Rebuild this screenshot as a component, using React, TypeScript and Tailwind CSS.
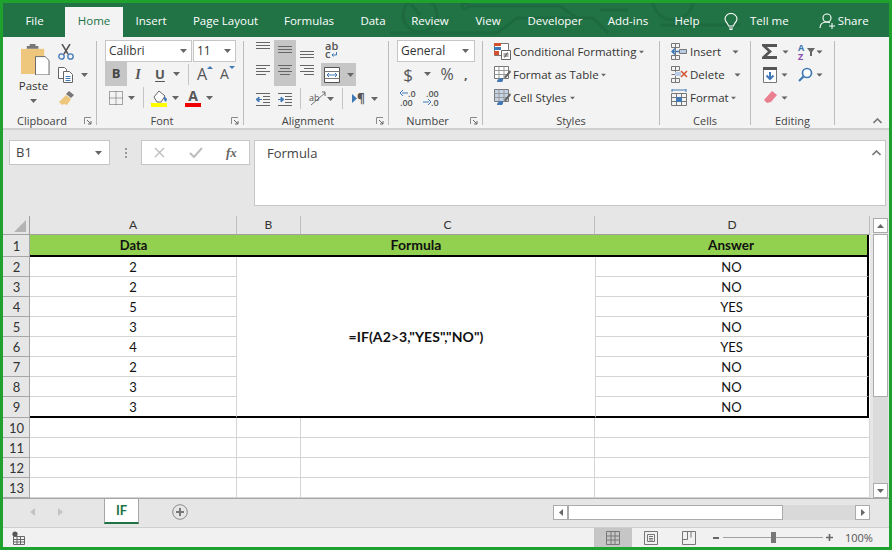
import type { ReactNode } from 'react';

const TABS = [
  { label: 'File', w: 'w-[61px]' },
  { label: 'Home', w: 'w-[58px]', active: true },
  { label: 'Insert', w: 'w-[56px]' },
  { label: 'Page Layout', w: 'w-[93px]' },
  { label: 'Formulas', w: 'w-[74px]' },
  { label: 'Data', w: 'w-[54px]' },
  { label: 'Review', w: 'w-[60px]' },
  { label: 'View', w: 'w-[56px]' },
  { label: 'Developer', w: 'w-[78px]' },
  { label: 'Add-ins', w: 'w-[68px]' },
  { label: 'Help', w: 'w-[50px]' },
];

const ROWS = [
  { n: 2, data: '2', answer: 'NO' },
  { n: 3, data: '2', answer: 'NO' },
  { n: 4, data: '5', answer: 'YES' },
  { n: 5, data: '3', answer: 'NO' },
  { n: 6, data: '4', answer: 'YES' },
  { n: 7, data: '2', answer: 'NO' },
  { n: 8, data: '3', answer: 'NO' },
  { n: 9, data: '3', answer: 'NO' },
];

function Caret({ className = '' }: { className?: string }) {
  return (
    <svg width="7" height="4" viewBox="0 0 7 4" className={`shrink-0 ${className}`}>
      <path d="M0 0h7L3.5 4z" fill="#666" />
    </svg>
  );
}

function Launcher() {
  return (
    <svg width="8" height="8" viewBox="0 0 8 8" className="absolute right-[4px] top-[6px]">
      <path d="M.5 7V.5H7" fill="none" stroke="#8a8a8a" />
      <path d="M3 3l4 4M7 4v3H4" fill="none" stroke="#666" />
    </svg>
  );
}

function Group({ label, w, launcher, children }: { label: string; w: string; launcher?: boolean; children: ReactNode }) {
  return (
    <div className={`${w} shrink-0 flex flex-col`}>
      <div className="h-[74px]">{children}</div>
      <div className={`relative flex-1 flex items-center justify-center text-[11px] leading-none text-[#444] pt-[1px] ${launcher ? 'pr-[16px]' : ''}`}>
        {label}
        {launcher && <Launcher />}
      </div>
    </div>
  );
}

function Sep() {
  return <div className="w-px h-[84px] mt-[4px] bg-[#bcbcbc] shrink-0" />;
}

function Lines({ ys, x = [[1, 15]] }: { ys: number[]; x?: number[][] }) {
  return (
    <svg width="16" height="16" viewBox="0 0 16 16">
      {ys.map((y, i) => {
        const seg = x[i % x.length];
        return <path key={y} d={`M${seg[0]} ${y + 0.5}H${seg[1]}`} stroke="#666" />;
      })}
    </svg>
  );
}

function IndentIcon({ flip }: { flip?: boolean }) {
  return (
    <svg width="16" height="14" viewBox="0 0 16 14">
      <path d="M1 1.5h14M8 4.5h7M8 7.5h7M8 10.5h7M1 13.5h14" stroke="#666" />
      <path d={flip ? 'M1 7.5h5M4 5l3 2.5L4 10z' : 'M7 7.5H2M4 5L1 7.5 4 10z'} stroke="#3f78b5" fill="#3f78b5" />
    </svg>
  );
}

function TableIcon({ fill }: { fill: string }) {
  return (
    <svg width="17" height="17" viewBox="0 0 17 17">
      <path d="M.5.5h14v12H.5z" fill={fill} stroke="#777" />
      <path d="M.5 4.5h14M.5 8.5h14M5 .5v12M10 .5v12" stroke="#999" />
      <path d="M16 4l-6 7 1.5 1.5L17 6z" fill="#666" />
      <path d="M3 16c0-3 3-4 5-4 2 1 1 3 0 4z" fill="#3f78b5" />
    </svg>
  );
}

function StyleRow({ icon, label, caretClass = 'ml-[3px]' }: { icon: ReactNode; label: string; caretClass?: string }) {
  return (
    <div className="h-[23px] flex items-center">
      <div className="w-[19px] shrink-0">{icon}</div>
      <span className="text-[11.5px] leading-none text-[#333] whitespace-nowrap">{label}</span>
      <Caret className={caretClass} />
    </div>
  );
}

function GridIcon({ children }: { children?: ReactNode }) {
  return (
    <svg width="17" height="18" viewBox="0 0 17 18">
      {children}
    </svg>
  );
}

function Ribbon() {
  return (
    <div className="h-[93px] bg-[#f3f3f3] border-b-2 border-[#cfcfcf] flex pl-[1px]">
      <Group label="Clipboard" w="w-[92px]" launcher>
        <div className="flex pt-[7px]">
          <div className="w-[53px] flex flex-col items-center pl-[6px]">
            <svg width="29" height="31" viewBox="0 0 30 32" className="ml-[3px]">
              <path d="M0 5h24v26H0z" fill="#eec67c" />
              <path d="M6 5h12V2h-3V0H9v2H6z" fill="#777" />
              <path d="M15 13h10l4 4v15H15z" fill="#fff" stroke="#666" />
            </svg>
            <span className="text-[11.5px] leading-none text-[#333] mt-[5px]">Paste</span>
            <Caret className="mt-[7px]" />
          </div>
          <div className="flex flex-col pl-[1px]">
            <svg width="16" height="16" viewBox="0 0 16 16">
              <path d="M4 0l6 10M12 0L6 10" stroke="#555" strokeWidth="1.5" />
              <circle cx="3.5" cy="12.5" r="2.7" fill="none" stroke="#3f78b5" strokeWidth="1.3" />
              <circle cx="12.5" cy="12.5" r="2.7" fill="none" stroke="#3f78b5" strokeWidth="1.3" />
            </svg>
            <div className="flex items-center gap-[7px] mt-[7px]">
              <svg width="16" height="16" viewBox="0 0 16 16">
                <path d="M.5.5h6l2 2v9h-8z" fill="#fff" stroke="#666" />
                <path d="M5.5 4.5h6l3 3v8h-9z" fill="#fff" stroke="#666" />
                <path d="M7.5 9.5h5M7.5 11.5h5M7.5 13.5h5" stroke="#3f78b5" />
              </svg>
              <Caret />
            </div>
            <svg width="17" height="15" viewBox="0 0 17 15" className="mt-[8px]">
              <path d="M11 0l5 4-3 3-5-4z" fill="#777" />
              <path d="M8 4l5 4-4 6-3-1-2 1-3-3 2-2z" fill="#eec67c" />
            </svg>
          </div>
        </div>
      </Group>
      <Sep />
      <Group label="Font" w="w-[146px]" launcher>
        <div className="pt-[3px] pl-[8px]">
          <div className="flex gap-px">
            <div className="w-[87px] h-[22px] bg-white border border-[#c6c6c6] flex items-center justify-between px-[3px]">
              <span className="text-[12px] leading-none text-[#333]">Calibri</span>
              <Caret className="mr-[1px]" />
            </div>
            <div className="w-[43px] h-[22px] bg-white border border-[#c6c6c6] flex items-center justify-between px-[3px]">
              <span className="text-[12px] leading-none text-[#333]">11</span>
              <Caret className="mr-[1px]" />
            </div>
          </div>
          <div className="flex items-center h-[24px]">
            <div className="w-[22px] h-[24px] bg-[#c6c6c6] flex items-center justify-center font-bold text-[13px] text-[#444]">B</div>
            <div className="w-[22px] text-center italic font-['Liberation_Serif',serif] font-bold text-[14px] text-[#555]">I</div>
            <div className="w-[22px] text-center text-[13px] leading-[14px] font-bold text-[#555] underline underline-offset-2">U</div>
            <Caret className="ml-[2px]" />
            <div className="w-px h-[21px] bg-[#c6c6c6] ml-[8px]" />
            <div className="ml-[8px] w-[20px] flex items-start">
              <span className="text-[16px] leading-[18px] text-[#555]">A</span>
              <svg width="6" height="3" viewBox="0 0 6 3" className="shrink-0 mt-[1px]"><path d="M0 3l3-3 3 3z" fill="#3f78b5" /></svg>
            </div>
            <div className="ml-[3px] w-[18px] flex items-start">
              <span className="text-[14px] leading-[18px] text-[#555]">A</span>
              <svg width="6" height="3" viewBox="0 0 6 3" className="shrink-0 mt-[1px]"><path d="M0 0h6L3 3z" fill="#3f78b5" /></svg>
            </div>
          </div>
          <div className="flex items-center h-[23px] pl-[4px]">
            <svg width="14" height="14" viewBox="0 0 14 14">
              <path d="M.5.5h13v13H.5zM.5 7h13M7 .5v13" fill="none" stroke="#555" strokeDasharray="1 1" />
            </svg>
            <Caret className="ml-[5px]" />
            <div className="w-px h-[21px] bg-[#c6c6c6] ml-[8px]" />
            <svg width="17" height="18" viewBox="0 0 17 18" className="ml-[7px]">
              <path d="M3 8l5-6 6 5-4 6H6z" fill="#fff" stroke="#666" />
              <path d="M13 7l3 3-1 3-2-2z" fill="#3f78b5" />
              <path d="M0 14h16v4H0z" fill="#ffff00" />
            </svg>
            <Caret className="ml-[4px]" />
            <div className="relative w-[16px] h-[18px] ml-[6px] flex flex-col items-center">
              <span className="text-[14px] leading-[14px] font-bold text-[#555]">A</span>
              <div className="w-[16px] h-[4px] bg-[#f00000]" />
            </div>
            <Caret className="ml-[5px]" />
          </div>
        </div>
      </Group>
      <Sep />
      <Group label="Alignment" w="w-[144px]" launcher>
        <div className="pl-[8px] pt-[3px]">
          <div className="flex">
            <div className="w-[22px] h-[46px] flex flex-col items-center">
              <Lines ys={[2, 5, 8]} />
              <div className="mt-[7px]">
                <Lines ys={[2, 5, 8, 11]} x={[[1, 15], [1, 11], [1, 15], [1, 11]]} />
              </div>
            </div>
            <div className="w-[22px] h-[46px] bg-[#c6c6c6] flex flex-col items-center">
              <div className="mt-[4px]"><Lines ys={[2, 5, 8]} /></div>
              <div className="mt-[3px]">
                <Lines ys={[2, 5, 8, 11]} x={[[1, 15], [3, 13], [1, 15], [3, 13]]} />
              </div>
            </div>
            <div className="w-[22px] h-[46px] flex flex-col items-center">
              <div className="mt-[9px]"><Lines ys={[2, 5, 8]} /></div>
              <div className="-mt-[2px]">
                <Lines ys={[2, 5, 8, 11]} x={[[1, 15], [5, 15], [1, 15], [5, 15]]} />
              </div>
            </div>
            <div className="flex flex-col ml-[3px]">
              <div className="h-[23px] pl-[4px] flex items-start">
                <div className="flex flex-col text-[11px] leading-[8px] font-semibold text-[#555] pt-[2px]">
                  <span>ab</span>
                  <span className="flex items-center gap-[1px]">
                    c
                    <svg width="6" height="5" viewBox="0 0 6 5"><path d="M5.5 0v3H1M2.5 1.5L1 3l1.5 1.5" fill="none" stroke="#3f78b5" /></svg>
                  </span>
                </div>
              </div>
              <div className="w-[35px] h-[23px] bg-[#c6c6c6] flex items-center gap-[7px] pl-[3px]">
                <svg width="16" height="16" viewBox="0 0 16 16">
                  <path d="M.5.5h15v15H.5z" fill="#fff" stroke="#555" />
                  <path d="M.5 4.5h15M.5 11.5h15" stroke="#777" />
                  <path d="M3 8h10M5 6L3 8l2 2M11 6l2 2-2 2" fill="none" stroke="#3f78b5" />
                </svg>
                <Caret />
              </div>
            </div>
          </div>
          <div className="flex items-center h-[23px] mt-[1px]">
            <div className="w-[22px] flex justify-center"><IndentIcon /></div>
            <div className="w-[22px] flex justify-center"><IndentIcon flip /></div>
            <div className="w-px h-[21px] bg-[#c6c6c6] ml-[4px]" />
            <svg width="18" height="16" viewBox="0 0 18 16" className="ml-[7px]">
              <path d="M3 14l14-12" stroke="#777" />
              <path d="M14 1h3v4" fill="none" stroke="#666" />
              <text x="1" y="10" fontSize="9" fill="#555" fontFamily="Open Sans, sans-serif">ab</text>
            </svg>
            <Caret className="ml-[1px]" />
            <div className="w-px h-[21px] bg-[#c6c6c6] ml-[8px]" />
            <span className="flex items-center ml-[9px] text-[12px] leading-none font-bold text-[#555]">
              <svg width="5" height="9" viewBox="0 0 5 9"><path d="M0 0l5 4.5L0 9z" fill="#3f78b5" /></svg>
              ¶
            </span>
            <Caret className="ml-[6px]" />
          </div>
        </div>
      </Group>
      <Sep />
      <Group label="Number" w="w-[93px]" launcher>
        <div className="pt-[3px] pl-[8px]">
          <div className="w-[78px] h-[22px] bg-white border border-[#c6c6c6] flex items-center justify-between px-[3px]">
            <span className="text-[12px] leading-none text-[#333]">General</span>
            <Caret className="mr-[2px]" />
          </div>
          <div className="flex items-center h-[24px]">
            <span className="w-[22px] text-center text-[17px] leading-none text-[#555]">$</span>
            <Caret className="ml-[5px]" />
            <span className="ml-[5px] w-[22px] text-center text-[16px] leading-none text-[#555]">%</span>
            <span className="ml-[6px] font-bold text-[13px] leading-none text-[#555]">,</span>
          </div>
          <div className="flex items-center h-[23px] pl-[3px] gap-[6px]">
            <div className="w-[17px] text-[9px] leading-[9px] font-semibold text-[#555]">
              <div className="flex items-center">
                <svg width="8" height="6" viewBox="0 0 8 6"><path d="M8 3H2M3 0L0 3l3 3" fill="none" stroke="#3f78b5" /></svg>
                .0
              </div>
              <div>.00</div>
            </div>
            <div className="w-[17px] text-[9px] leading-[9px] font-semibold text-[#555]">
              <div className="pl-[3px]">.00</div>
              <div className="flex items-center">
                <svg width="8" height="6" viewBox="0 0 8 6"><path d="M0 3h6M5 0l3 3-3 3" fill="none" stroke="#3f78b5" /></svg>
                .0
              </div>
            </div>
          </div>
        </div>
      </Group>
      <Sep />
      <Group label="Styles" w="w-[176px]">
        <div className="pt-[3px] pl-[11px]">
          <StyleRow
            label="Conditional Formatting"
            caretClass="ml-[2px] scale-75"
            icon={
              <svg width="17" height="17" viewBox="0 0 17 17">
                <path d="M.5.5h14v12H.5z" fill="#fff" stroke="#777" />
                <path d="M0 0h7v3H0z" fill="#d2502e" />
                <path d="M0 4h7v3H0z" fill="#3f78b5" />
                <path d="M0 8h5v4H0z" fill="#d2502e" />
                <path d="M7.5 7.5h9v9h-9z" fill="#fff" stroke="#666" />
                <path d="M9.5 11h5M9.5 13h5M13.5 9.5l-3 5" stroke="#555" />
              </svg>
            }
          />
          <StyleRow label="Format as Table" caretClass="ml-[1px] scale-75" icon={<TableIcon fill="#fff" />} />
          <StyleRow label="Cell Styles" caretClass="ml-[2px] scale-75" icon={<TableIcon fill="#c5d3e6" />} />
        </div>
      </Group>
      <Sep />
      <Group label="Cells" w="w-[90px]">
        <div className="pt-[3px] pl-[11px]">
          <StyleRow
            label="Insert"
            caretClass="ml-[11px] scale-90"
            icon={
              <GridIcon>
                <path d="M.5.5h8v4h-8zM.5 12.5h8v4h-8zM4.5.5v16" fill="none" stroke="#777" />
                <path d="M8.5 6.5h7v4h-7z" fill="#b8cde5" stroke="#777" />
                <path d="M8 8.5H1M4 5.5l-3 3 3 3" fill="none" stroke="#3f78b5" strokeWidth="1.5" />
              </GridIcon>
            }
          />
          <StyleRow
            label="Delete"
            caretClass="ml-[9px] scale-90"
            icon={
              <GridIcon>
                <path d="M.5.5h8v4h-8zM.5 12.5h8v4h-8zM4.5.5v16M.5 8.5h8" fill="none" stroke="#777" />
                <path d="M4 6h6v4H4z" fill="#b8cde5" />
                <path d="M10 5l6 6M16 5l-6 6" stroke="#d2502e" strokeWidth="1.5" />
              </GridIcon>
            }
          />
          <StyleRow
            label="Format"
            caretClass="ml-[1px] scale-75"
            icon={
              <GridIcon>
                <path d="M1 1h14" stroke="#3f78b5" />
                <path d="M1 0v3M15 0v3" stroke="#3f78b5" />
                <path d="M.5 4.5h15v12H.5zM.5 8.5h15M.5 12.5h15M5.5 4.5v12M10.5 4.5v12" fill="none" stroke="#777" />
                <path d="M5 8h6v5H5z" fill="#3f78b5" />
              </GridIcon>
            }
          />
        </div>
      </Group>
      <Sep />
      <Group label="Editing" w="w-[83px]">
        <div className="pt-[3px] pl-[11px]">
          <div className="h-[23px] flex items-center">
            <svg width="16" height="15" viewBox="0 0 16 15">
              <path d="M0 0h15v3H5l5 4.5L5 12h10v3H0v-2l6-5.5L0 2z" fill="#555" />
            </svg>
            <Caret className="ml-[4px] scale-90" />
            <div className="ml-[9px] w-[9px] text-[9px] leading-[9px] font-bold">
              <div className="text-[#3f78b5]">A</div>
              <div className="text-[#8a4fb0]">Z</div>
            </div>
            <svg width="8" height="8" viewBox="0 0 8 8"><path d="M0 0h8L5 4v4H3V4z" fill="#666" /></svg>
            <Caret className="ml-[1px] scale-90" />
          </div>
          <div className="h-[23px] flex items-center">
            <svg width="15" height="16" viewBox="0 0 15 16" className="ml-[1px]">
              <path d="M.5 2.5h13v13H.5z" fill="#fff" stroke="#777" />
              <path d="M0 0h14v3H0z" fill="#555" />
              <path d="M7 5v7M3.5 8.5L7 12l3.5-3.5" fill="none" stroke="#3f78b5" strokeWidth="2" />
            </svg>
            <Caret className="ml-[3px] scale-90" />
            <svg width="15" height="15" viewBox="0 0 15 15" className="ml-[10px]">
              <circle cx="9" cy="6" r="4.5" fill="#fff" stroke="#3f78b5" strokeWidth="1.7" />
              <path d="M5.5 9.5L1 14" stroke="#3f78b5" strokeWidth="2.2" />
            </svg>
            <Caret className="ml-[3px] scale-90" />
          </div>
          <div className="h-[23px] flex items-center">
            <svg width="14" height="13" viewBox="0 0 14 13" className="ml-[1px]">
              <path d="M9 0l5 4-6 7-4 1-3-3z" fill="#ea7f8f" />
            </svg>
            <Caret className="ml-[4px] scale-90" />
          </div>
        </div>
      </Group>
      <Sep />
      <div className="flex-1 relative">
        <svg width="9" height="6" viewBox="0 0 9 6" className="absolute right-[7px] bottom-[4px]">
          <path d="M.5 5l4-4 4 4" fill="none" stroke="#777" strokeWidth="1.6" />
        </svg>
      </div>
    </div>
  );
}

function TitleBar() {
  return (
    <div className="relative h-[34px] bg-[#217346] flex items-end pl-[1px]">
      <svg width="886" height="34" viewBox="3 3 886 34" className="absolute left-0 top-0">
        <g fill="none" stroke="#1e6a40" strokeWidth="3">
          <circle cx="420" cy="15" r="17" />
          <path d="M411 4l9 11" />
          <path d="M390 33h107l20-15h76l15 15" />
          <circle cx="465" cy="6" r="3" />
          <path d="M468 6h92l20 14" />
          <circle cx="673" cy="0" r="20" />
          <path d="M660 25h80M600 10h28" />
        </g>
      </svg>
      {TABS.map(t => (
        <div
          key={t.label}
          className={`relative ${t.w} h-[30px] flex items-center justify-center text-[11.5px] leading-none pb-[2px] ${
            t.active ? 'bg-[#f3f3f3] text-[#217346]' : 'text-white'
          }`}
        >
          {t.label}
        </div>
      ))}
      <div className="relative h-[30px] flex items-center text-white text-[11.5px] leading-none pb-[2px] ml-[12px]">
        <svg width="14" height="17" viewBox="0 0 14 17">
          <path d="M4.5 13C4 10 1 9 1 5.8a6 5.3 0 0 1 12 0C13 9 10 10 9.5 13z" fill="none" stroke="#fff" strokeWidth="1.1" />
          <path d="M5 15h4M5.5 16.5h3" stroke="#fff" />
        </svg>
        <span className="ml-[12px]">Tell me</span>
        <svg width="18" height="17" viewBox="0 0 18 17" className="ml-[30px]">
          <circle cx="8" cy="5" r="4" fill="none" stroke="#fff" strokeWidth="1.1" />
          <path d="M1 15c0-4 3-6 7-6 1 0 2 .2 3 .7" fill="none" stroke="#fff" strokeWidth="1.1" />
          <path d="M13 10v6M10 13h6" stroke="#fff" />
        </svg>
        <span className="ml-[1px]">Share</span>
      </div>
    </div>
  );
}

function FormulaBar() {
  return (
    <div className="h-[86px] bg-[#e6e6e6] flex pt-[10px] pl-[6px]">
      <div className="w-[101px] h-[25px] bg-white border border-[#c6c6c6] flex items-center justify-between px-[6px] text-[13px] leading-none text-[#444]">
        B1
        <Caret className="mr-[1px]" />
      </div>
      <div className="w-[31px] h-[25px] flex flex-col items-center justify-center gap-[2px]">
        <div className="w-[2px] h-[2px] bg-[#999]" />
        <div className="w-[2px] h-[2px] bg-[#999]" />
        <div className="w-[2px] h-[2px] bg-[#999]" />
      </div>
      <div className="w-[109px] h-[25px] bg-white border border-[#c6c6c6] flex items-center pl-[12px]">
        <svg width="11" height="11" viewBox="0 0 11 11">
          <path d="M1 1l9 9M10 1l-9 9" stroke="#bdbdbd" strokeWidth="1.4" />
        </svg>
        <svg width="14" height="11" viewBox="0 0 14 11" className="ml-[24px]">
          <path d="M1 6l4 4 8-9" fill="none" stroke="#bdbdbd" strokeWidth="2" />
        </svg>
        <span className="ml-[23px] font-['Liberation_Serif',serif] italic font-bold text-[13px] leading-none text-[#666]">fx</span>
      </div>
      <div className="relative ml-[4px] w-[632px] h-[66px] bg-white border border-[#c6c6c6] pl-[12px] pt-[4px] text-[13px] leading-[16px] text-[#444]">
        Formula
        <svg width="9" height="6" viewBox="0 0 9 6" className="absolute right-[4px] top-[9px]">
          <path d="M.5 5l4-4 4 4" fill="none" stroke="#777" strokeWidth="1.6" />
        </svg>
      </div>
    </div>
  );
}

const cell = 'flex items-center justify-center border-[#d4d4d4]';
const rowHead = 'flex items-center justify-center bg-[#e6e6e6] border-r border-b border-[#a6a6a6] text-[13px] leading-none text-[#333] pl-[1px] pt-[1px]';
const colHead = 'flex items-center justify-center border-r border-[#bdbdbd] border-b border-b-[#a0a0a0] text-[12px] leading-none text-[#333]';

function Sheet() {
  return (
    <div className="grid grid-cols-[27px_207px_64px_294px_275px] grid-rows-[19px_22px_20px_20px_20px_20px_20px_20px_20px_21px_20px_20px_20px_20px] font-['Lato',sans-serif] bg-white">
      <div className="bg-[#e6e6e6] border-r border-b border-[#a0a0a0] flex items-end justify-end pr-[3px] pb-[2px]">
        <svg width="12" height="12" viewBox="0 0 12 12"><path d="M12 0v12H0z" fill="#b4b4b4" /></svg>
      </div>
      {['A', 'B', 'C', 'D'].map(c => (
        <div key={c} className={`${colHead} bg-[#e6e6e6]`}>{c}</div>
      ))}

      <div className={rowHead}>1</div>
      <div className="flex items-center justify-center pt-[1px] bg-[#92d050] border-b-2 border-black font-bold text-[13px] leading-none text-[#111]">Data</div>
      <div className="col-span-2 flex items-center justify-center bg-[#92d050] border-b-2 border-black font-bold text-[14px] leading-none text-[#111]">Formula</div>
      <div className="mr-[1px] flex items-center justify-center pt-[2px] bg-[#92d050] border-b-2 border-r-2 border-black font-bold text-[13.5px] leading-none text-[#111]">Answer</div>

      {ROWS.map((r, i) => (
        <div key={r.n} className="contents">
          <div className={rowHead} style={{ gridRow: i + 3, gridColumn: 1 }}>{r.n}</div>
          <div
            className={`${cell} pt-[1px] text-[13px] leading-none text-[#111] ${i === 7 ? 'border-b-2 border-b-black' : 'border-b'} border-r`}
            style={{ gridRow: i + 3, gridColumn: 2 }}
          >
            {r.data}
          </div>
          <div
            className={`${cell} pt-[1px] mr-[1px] text-[13px] leading-none text-[#111] border-r-2 border-r-black border-l ${
              i === 7 ? 'border-b-2 border-b-black' : 'border-b'
            }`}
            style={{ gridRow: i + 3, gridColumn: 5 }}
          >
            {r.answer}
          </div>
        </div>
      ))}
      <div className="col-start-3 col-span-2 row-start-3 row-span-8 flex items-center justify-center border-b-2 border-black bg-white font-bold text-[14px] tracking-[0.1px] leading-none text-[#111]">
        {'=IF(A2>3,"YES","NO")'}
      </div>

      {[10, 11, 12, 13].map((n, i) => (
        <div key={n} className="contents">
          <div className={rowHead} style={{ gridRow: i + 11, gridColumn: 1 }}>{n}</div>
          {[2, 3, 4, 5].map(col => (
            <div key={col} className={`${cell} border-r border-b`} style={{ gridRow: i + 11, gridColumn: col }} />
          ))}
        </div>
      ))}
    </div>
  );
}

function VScroll() {
  return (
    <div className="w-[19px] bg-[#e6e6e6] flex flex-col pl-[3px] pr-px pt-[2px]">
      <div className="h-[15px] bg-white border border-[#ababab] flex items-center justify-center">
        <svg width="7" height="4" viewBox="0 0 7 4"><path d="M0 4h7L3.5 0z" fill="#666" /></svg>
      </div>
      <div className="flex-1 flex flex-col bg-[#dbdbdb] mt-px">
        <div className="h-[163px] bg-white border border-[#ababab]" />
      </div>
      <div className="h-[15px] bg-white border border-[#ababab] flex items-center justify-center">
        <Caret />
      </div>
    </div>
  );
}

function SheetTabs() {
  return (
    <div className="h-[29px] bg-[#e6e6e6] border-t border-[#a6a6a6] flex">
      <div className="flex items-center h-[26px] pl-[27px]">
        <svg width="5" height="8" viewBox="0 0 5 8"><path d="M5 0v8L0 4z" fill="#c4c4c4" /></svg>
        <svg width="5" height="8" viewBox="0 0 5 8" className="ml-[23px]"><path d="M0 0v8l5-4z" fill="#c4c4c4" /></svg>
      </div>
      <div className="ml-[41px] w-[35px] h-[25px] bg-white border-x border-[#a6a6a6] border-b-2 border-b-[#217346] flex items-center justify-center font-['Lato',sans-serif] font-bold text-[13px] leading-none text-[#217346]">
        IF
      </div>
      <div className="ml-[33px] h-[26px] flex items-center">
        <svg width="16" height="16" viewBox="0 0 16 16">
          <circle cx="8" cy="8" r="7.3" fill="none" stroke="#8a8a8a" />
          <path d="M8 4v8M4 8h8" stroke="#777" strokeWidth="2" />
        </svg>
      </div>
      <div className="ml-[365px] mt-[6px] w-[317px] h-[15px] flex">
        <div className="w-[15px] bg-white border border-[#ababab] flex items-center justify-center">
          <svg width="4" height="7" viewBox="0 0 4 7"><path d="M4 0v7L0 3.5z" fill="#666" /></svg>
        </div>
        <div className="w-[215px] bg-white border border-[#ababab]" />
        <div className="flex-1 bg-[#d9d9d9]" />
        <div className="w-[15px] bg-white border border-[#ababab] flex items-center justify-center">
          <svg width="4" height="7" viewBox="0 0 4 7"><path d="M0 0v7l4-3.5z" fill="#666" /></svg>
        </div>
      </div>
    </div>
  );
}

function StatusBar() {
  return (
    <div className="flex-1 bg-[#f1f1f1] border-t border-[#cfcfcf] flex items-center">
      <svg width="13" height="14" viewBox="0 0 13 14" className="ml-[9px]">
        <circle cx="3" cy="3" r="2.6" fill="#555" />
        <path d="M1.5 5.5h11v8h-11zM1.5 8.5h11M1.5 11h11M5 5.5v8M8.5 5.5v8" fill="none" stroke="#666" />
      </svg>
      <div className="ml-[569px] w-[38px] self-stretch bg-[#c6c6c6] flex items-center justify-center">
        <svg width="14" height="14" viewBox="0 0 14 14">
          <path d="M.5.5h13v13H.5zM.5 5h13M.5 9h13M5 .5v13M9 .5v13" fill="none" stroke="#777" />
        </svg>
      </div>
      <svg width="14" height="14" viewBox="0 0 14 14" className="ml-[12px]">
        <path d="M.5.5h13v13H.5z" fill="none" stroke="#777" />
        <path d="M3.5 3.5h7v7h-7zM5 5.5h4M5 7.5h4M5 9h4" fill="none" stroke="#777" />
      </svg>
      <svg width="14" height="14" viewBox="0 0 14 14" className="ml-[24px]">
        <path d="M.5.5h13v13H.5zM.5 8.5h5V.5M9 .5v6" fill="none" stroke="#777" />
      </svg>
      <div className="w-[6px] h-[2px] bg-[#666] ml-[17px]" />
      <div className="relative w-[100px] h-px bg-[#a0a0a0] ml-[4px]">
        <div className="absolute left-[48px] -top-[5px] w-[5px] h-[11px] bg-[#777]" />
      </div>
      <svg width="7" height="7" viewBox="0 0 7 7" className="ml-[3px]"><path d="M3.5 0v7M0 3.5h7" stroke="#666" strokeWidth="1.6" /></svg>
      <span className="ml-[12px] text-[11px] leading-none text-[#555]">100%</span>
    </div>
  );
}

export default function App() {
  return (
    <div className="w-[892px] h-[550px] border-[3px] border-[#1ea12d] flex flex-col overflow-hidden bg-white font-['Open_Sans',sans-serif]">
      <TitleBar />
      <Ribbon />
      <FormulaBar />
      <div className="flex h-[282px]">
        <Sheet />
        <VScroll />
      </div>
      <SheetTabs />
      <StatusBar />
    </div>
  );
}
